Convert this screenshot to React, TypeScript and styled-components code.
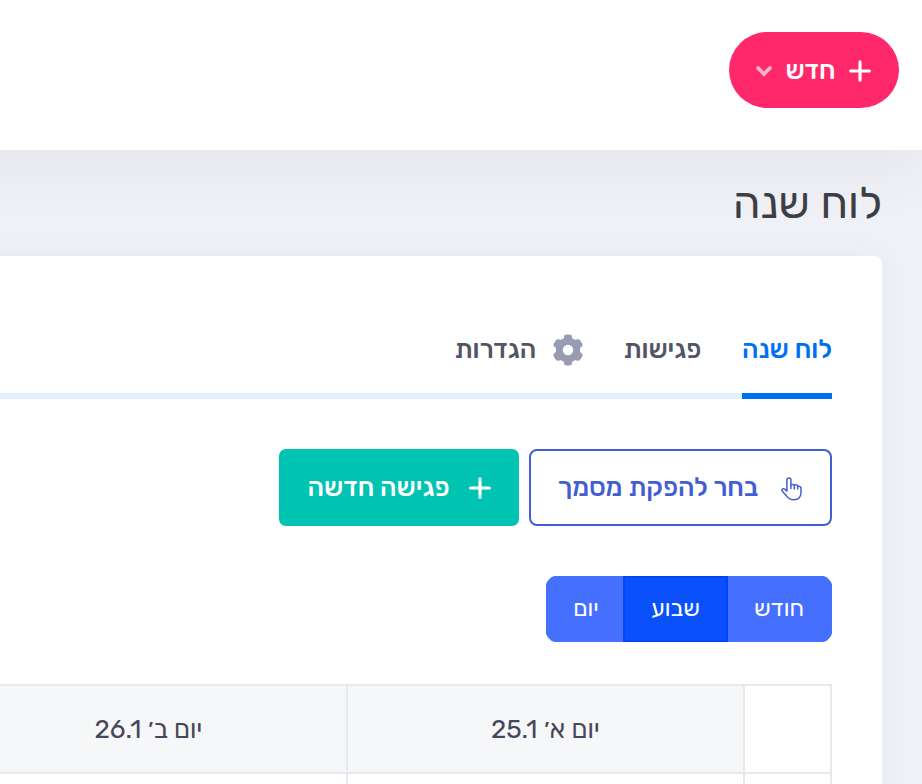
import React from "react";
import styled, { createGlobalStyle } from "styled-components";

const Global = createGlobalStyle`
  *, *::before, *::after { box-sizing: border-box; }
  body {
    margin: 0;
    background: #f0f1f7;
    font-family: Rubik, "Open Sans", "Noto Sans", "DejaVu Sans", sans-serif;
  }
`;

const Page = styled.div`
  direction: rtl;
  width: 922px;
  height: 784px;
  overflow: hidden;
  display: flex;
  flex-direction: column;
`;

const TopBar = styled.header`
  flex: none;
  height: 150px;
  margin-left: -120px;
  padding: 32px 23px 0;
  background: #fff;
  box-shadow: 0 20px 60px 0 rgba(70, 68, 80, 0.06);
`;

const Text = styled.span<{ $size: number; $width: number; $weight?: number; $drop?: number }>`
  display: flex;
  justify-content: center;
  flex: none;
  white-space: nowrap;
  width: ${(p) => p.$width}px;
  font-size: ${(p) => p.$size}px;
  font-weight: ${(p) => p.$weight ?? 400};
  line-height: 1;
  padding-top: ${(p) => p.$drop ?? 0}px;
`;

const NewButton = styled.button`
  display: flex;
  align-items: center;
  gap: 14px;
  width: 170px;
  height: 76px;
  padding: 2px 28px 0;
  border: 0;
  border-radius: 38px;
  background: #ff286b;
  color: #fff;
  font-family: inherit;
`;

const Icon = styled.svg<{ $gap?: number }>`
  display: block;
  flex: none;
  margin-left: ${(p) => p.$gap ?? 0}px;
`;

const Content = styled.main`
  flex: 1;
  display: flex;
  flex-direction: column;
  padding: 0 40px 0 0;
`;

const Title = styled.h1`
  flex: none;
  display: flex;
  align-items: center;
  height: 106px;
  margin: 0;
  color: #3d3e45;
`;

const Card = styled.section`
  flex: 1;
  margin-left: -60px;
  padding: 44px 50px 0 0;
  background: #fff;
  border-top-right-radius: 8px;
  box-shadow: 0 0 26px 0 rgba(82, 63, 105, 0.05);
`;

const Tabs = styled.nav`
  display: flex;
  gap: 40px;
  height: 99px;
  box-shadow: inset 0 -6px #e3effb;
`;

const Tab = styled.a<{ $active?: boolean }>`
  display: flex;
  align-items: center;
  height: 99px;
  padding-top: 6px;
  border-bottom: 6px solid ${(p) => (p.$active ? "#0070f3" : "transparent")};
  color: ${(p) => (p.$active ? "#0070f3" : "#515564")};
`;

const Actions = styled.div`
  display: flex;
  gap: 10px;
  margin-top: 50px;
`;

const Action = styled.button<{ $solid?: boolean }>`
  display: flex;
  align-items: center;
  width: ${(p) => (p.$solid ? 240 : 303)}px;
  height: 77px;
  padding: 0 ${(p) => (p.$solid ? 26 : 28)}px;
  border: 2px solid ${(p) => (p.$solid ? "#00c4b1" : "#435dd4")};
  border-radius: ${(p) => (p.$solid ? 7 : 8)}px;
  background: ${(p) => (p.$solid ? "#00c4b1" : "#fff")};
  color: ${(p) => (p.$solid ? "#fff" : "#435dd4")};
  font-family: inherit;
`;

const Segments = styled.div`
  display: flex;
  width: 286px;
  height: 66px;
  margin-top: 50px;
  border-radius: 11px;
  overflow: hidden;
`;

const Segment = styled.button<{ $w: number; $active?: boolean }>`
  display: flex;
  align-items: center;
  width: ${(p) => p.$w}px;
  padding: 0 26px;
  border: 2px solid ${(p) => (p.$active ? "#0246f5" : "#456fff")};
  background: ${(p) => (p.$active ? "#0b51fb" : "#456fff")};
  color: #fff;
  font-family: inherit;
`;

const Calendar = styled.div`
  display: grid;
  grid-template-columns: 85px 395px 395px;
  grid-template-rows: 86px 60px;
  gap: 2px;
  width: 832px;
  margin-top: 42px;
  padding: 2px 2px 0 0;
  background: #e8e8ef;
  overflow: hidden;
`;

const Cell = styled.div<{ $head?: boolean }>`
  display: flex;
  align-items: center;
  justify-content: center;
  background: ${(p) => (p.$head ? "#f5f7f9" : "#fff")};
  color: #48465b;
`;

const Plus = ({ gap }: { gap: number }) => (
  <Icon $gap={gap} width="22" height="22" viewBox="0 0 22 22" fill="none" stroke="currentColor" strokeWidth="3.1" strokeLinecap="round">
    <path d="M11 1.7v18.6M1.7 11h18.6" />
  </Icon>
);

const Chevron = () => (
  <Icon width="16" height="12" viewBox="0 0 16 12" fill="none" stroke="#ffb1ca" strokeWidth="3.8" strokeLinecap="round">
    <path d="M2.1 3 8 9l5.9-6" />
  </Icon>
);

const Gear = () => (
  <Icon $gap={17} width="30" height="32" viewBox="0 0 30 32" fill="#979cb2">
    <path
      fillRule="evenodd"
      d="M12.3.8Q15 0 17.7.8 18.8 1.1 18.9 2.2L19.1 4.3Q20.6 5 22.2 6L24.3 5.3Q25.8 4.8 26.8 5.9 28.8 8 29.5 10.6 29.8 11.7 28.9 12.4L27 14Q27.2 16 27 18L28.9 19.6Q29.8 20.3 29.5 21.4 28.8 24 26.8 26.1 25.8 27.2 24.3 26.7L22.2 26Q20.6 27 19.1 27.7L18.9 29.8Q18.8 30.9 17.7 31.2 15 32 12.3 31.2 11.2 30.9 11.1 29.8L10.9 27.7Q9.4 27 7.8 26L5.7 26.7Q4.2 27.2 3.2 26.1 1.2 24 .5 21.4.2 20.3 1.1 19.6L3 18Q2.8 16 3 14L1.1 12.4Q.2 11.7.5 10.6 1.2 8 3.2 5.9 4.2 4.8 5.7 5.3L7.8 6Q9.4 5 10.9 4.3L11.1 2.2Q11.2 1.1 12.3.8ZM15 10.8A5.2 5.2 0 1 0 15 21.2 5.2 5.2 0 1 0 15 10.8Z"
    />
  </Icon>
);

const Hand = () => (
  <Icon $gap={22} width="21" height="26" viewBox="0 -2 21 26" fill="none" stroke="currentColor" strokeWidth="1.5" strokeLinecap="round" strokeLinejoin="round">
    <path d="M5.9 14.2V2.9a2 2 0 0 1 4 0v8.5M9.9 8.6q0-1.2 1.6-1.2 1.8 0 1.8 1.7v2.8M13.3 8.8q0-1.1 1.5-1.1 1.9 0 1.9 1.8v2.4M16.7 9.4q3.3-.5 3.3 2.2v4.2c0 4.2-2.8 7-7.1 7-3.7 0-5.4-1.3-7.3-3.7L1.3 14.2c-1.2-1.6.8-3.3 2.4-2.1l2.2 2" />
  </Icon>
);

export default function App() {
  return (
    <Page>
      <Global />
      <TopBar>
        <NewButton>
          <Plus gap={0} />
          <Text $size={26} $width={49} $weight={500}>חדש</Text>
          <Chevron />
        </NewButton>
      </TopBar>
      <Content>
        <Title>
          <Text $size={44.2} $width={149}>לוח שנה</Text>
        </Title>
        <Card>
          <Tabs>
            <Tab $active>
              <Text $size={26} $width={90} $weight={500}>לוח שנה</Text>
            </Tab>
            <Tab>
              <Text $size={26} $width={79} $weight={500}>פגישות</Text>
            </Tab>
            <Tab>
              <Gear />
              <Text $size={26} $width={81} $weight={500}>הגדרות</Text>
            </Tab>
          </Tabs>
          <Actions>
            <Action>
              <Hand />
              <Text $size={26} $width={202} $weight={500}>בחר להפקת מסמך</Text>
            </Action>
            <Action $solid>
              <Plus gap={19} />
              <Text $size={26} $width={143} $weight={500}>פגישה חדשה</Text>
            </Action>
          </Actions>
          <Segments>
            <Segment $w={104}>
              <Text $size={23.4} $width={50}>חודש</Text>
            </Segment>
            <Segment $w={105} $active>
              <Text $size={23.4} $width={49}>שבוע</Text>
            </Segment>
            <Segment $w={77}>
              <Text $size={23.4} $width={18}>יום</Text>
            </Segment>
          </Segments>
          <Calendar>
            <Cell />
            <Cell $head>
              <Text $size={26} $width={110} $drop={2}>יום א׳ 25.1</Text>
            </Cell>
            <Cell $head>
              <Text $size={26} $width={110} $drop={2}>יום ב׳ 26.1</Text>
            </Cell>
            <Cell />
            <Cell />
            <Cell />
          </Calendar>
        </Card>
      </Content>
    </Page>
  );
}
